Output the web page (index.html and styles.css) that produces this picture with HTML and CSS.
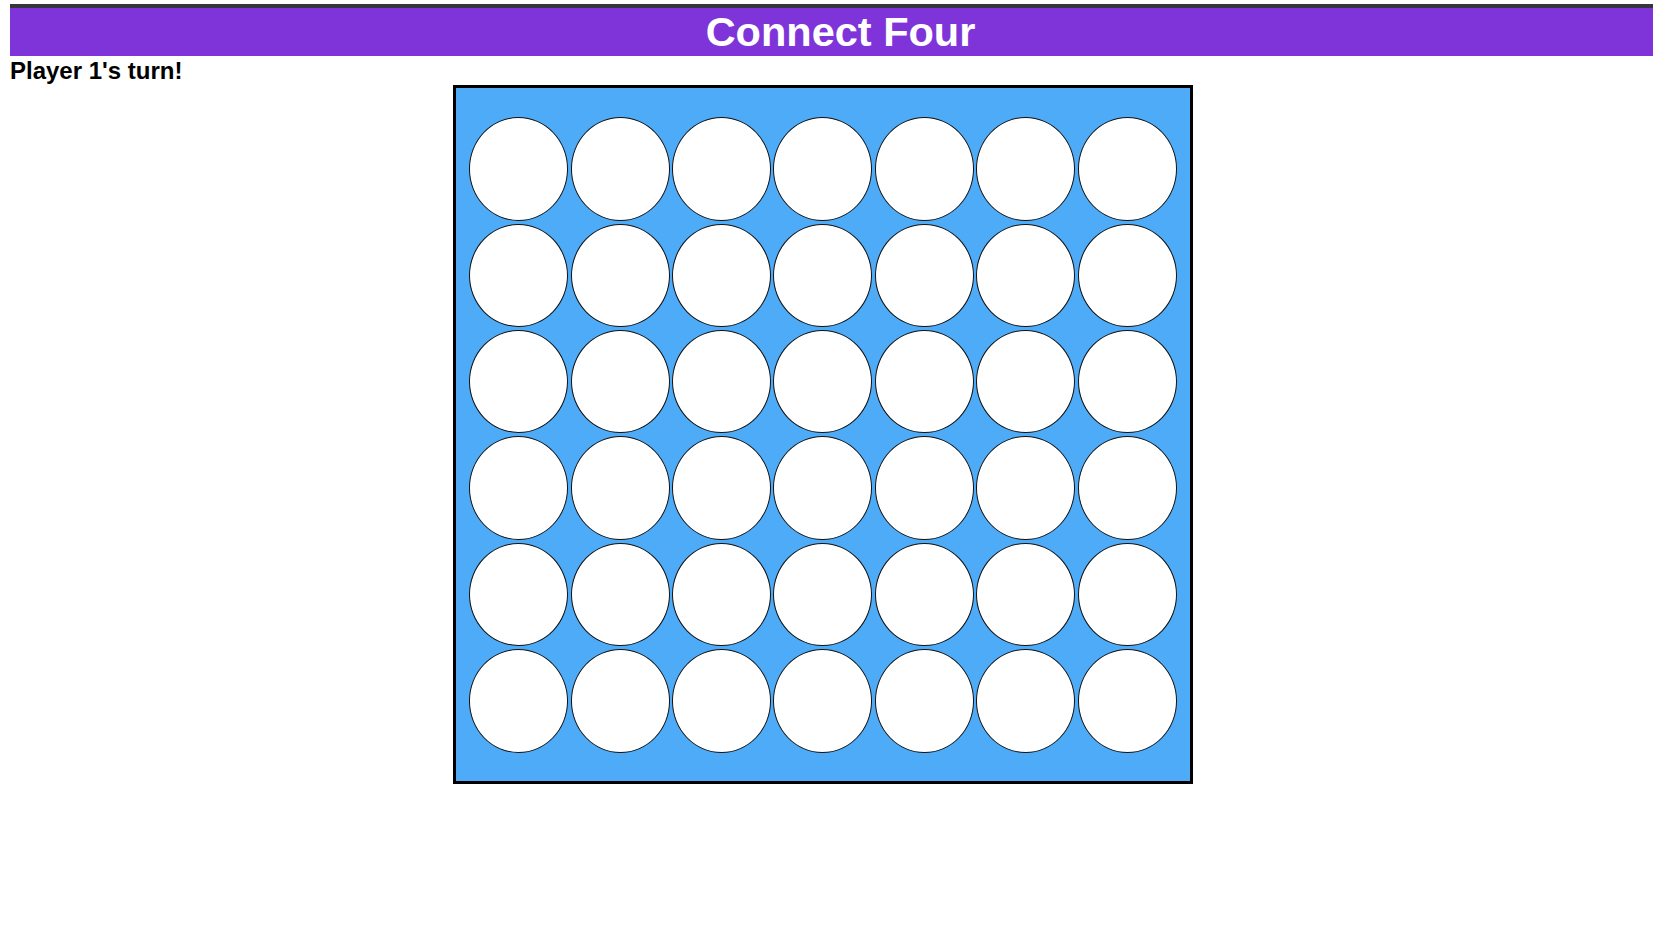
FILE: index.html
```html
<!DOCTYPE html>
<html lang="en">
<head>
<meta charset="utf-8">
<title>Connect Four</title>
<link rel="stylesheet" href="styles.css">
</head>
<body>
<div class="page">
  <h1 class="title">Connect Four</h1>
  <h2 class="status">Player 1's turn!</h2>
  <div class="board">
    <div class="slot"></div><div class="slot"></div><div class="slot"></div><div class="slot"></div><div class="slot"></div><div class="slot"></div><div class="slot"></div>
    <div class="slot"></div><div class="slot"></div><div class="slot"></div><div class="slot"></div><div class="slot"></div><div class="slot"></div><div class="slot"></div>
    <div class="slot"></div><div class="slot"></div><div class="slot"></div><div class="slot"></div><div class="slot"></div><div class="slot"></div><div class="slot"></div>
    <div class="slot"></div><div class="slot"></div><div class="slot"></div><div class="slot"></div><div class="slot"></div><div class="slot"></div><div class="slot"></div>
    <div class="slot"></div><div class="slot"></div><div class="slot"></div><div class="slot"></div><div class="slot"></div><div class="slot"></div><div class="slot"></div>
    <div class="slot"></div><div class="slot"></div><div class="slot"></div><div class="slot"></div><div class="slot"></div><div class="slot"></div><div class="slot"></div>
  </div>
</div>
</body>
</html>
```

FILE: styles.css
```css
html, body {
  margin: 0;
  padding: 0;
  background: #ffffff;
}

body {
  font-family: "Liberation Sans", Arial, sans-serif;
  color: #000000;
}

.page {
  padding: 4px 0 0 10px;
}

.title {
  margin: 0;
  border-top: 4px solid #37343d;
  background: #7f34d9;
  color: #ffffff;
  font-size: 41.5px;
  font-weight: bold;
  line-height: 48.4px;
  text-align: center;
  padding-left: 18px;
}

.status {
  margin: 0.6px 0 0 0;
  font-size: 24px;
  font-weight: bold;
  line-height: 27px;
}

.board {
  box-sizing: border-box;
  width: 740px;
  height: 699px;
  margin: 1px 0 0 443px;
  border: 3px solid #000000;
  background: #4dabf7;
  padding: 29.3px 13px 28.3px 13.3px;
  display: grid;
  grid-template-columns: repeat(7, 99px);
  grid-auto-rows: 103.4px;
  column-gap: 2.4px;
  row-gap: 3px;
}

.slot {
  box-sizing: border-box;
  background: #ffffff;
  border: 1.5px solid #111111;
  border-radius: 50%;
}
```
